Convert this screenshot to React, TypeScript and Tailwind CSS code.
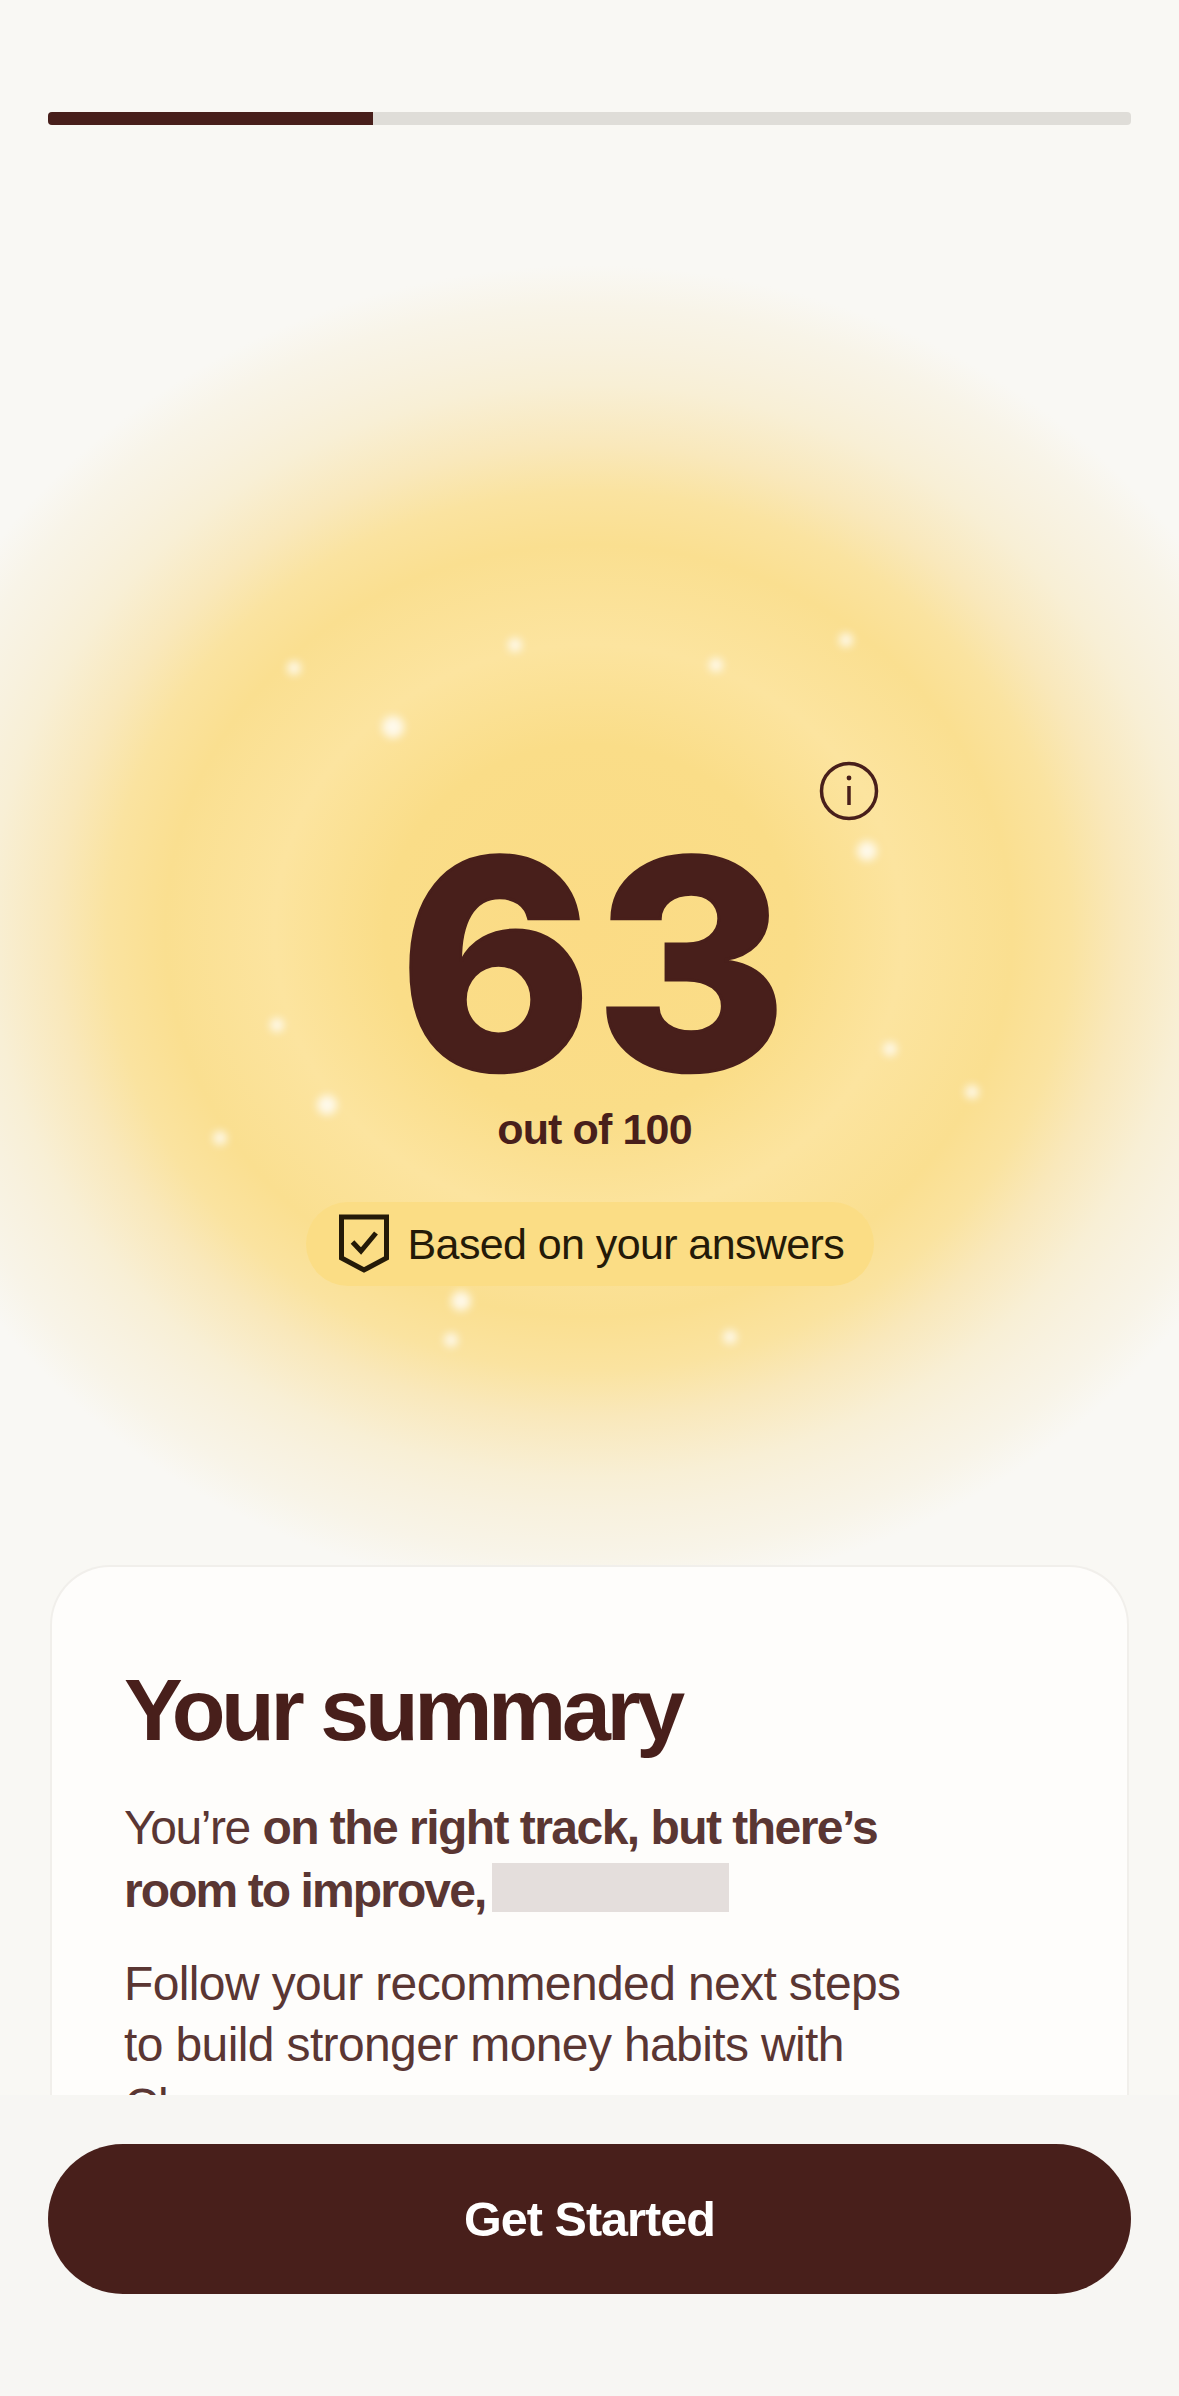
const sans = "font-['Liberation_Sans',Arial,sans-serif]";

// sparkles scattered over the glow: [x, y, size]
const sparkles: [number, number, number][] = [
  [294, 668, 14],
  [515, 645, 14],
  [716, 665, 14],
  [846, 640, 14],
  [393, 727, 22],
  [867, 851, 20],
  [277, 1025, 14],
  [327, 1105, 20],
  [220, 1138, 14],
  [890, 1049, 14],
  [972, 1092, 14],
  [461, 1301, 20],
  [451, 1340, 14],
  [730, 1337, 14],
];

function ShieldCheck() {
  return (
    <svg width="50" height="60" viewBox="0 0 50 60" fill="none" className="shrink-0">
      <path d="M2.5 3H47.5V44L25 56L2.5 44V3Z" stroke="#241a08" strokeWidth="5" strokeLinejoin="miter" />
      <path d="M13.5 28L22 37L37 19" stroke="#241a08" strokeWidth="5" />
    </svg>
  );
}

function InfoMark() {
  return (
    <svg width="60" height="60" viewBox="0 0 60 60" fill="none" className="absolute left-[819px] top-[636px]">
      <circle cx="30" cy="30" r="27.5" stroke="#481f1b" strokeWidth="3.5" />
      <circle cx="30" cy="17" r="2.4" fill="#481f1b" />
      <path d="M30 25V44" stroke="#481f1b" strokeWidth="3.5" />
    </svg>
  );
}

export default function App() {
  return (
    <div className={`relative flex h-[2396px] w-[1179px] flex-col overflow-hidden bg-[#f9f8f4] ${sans}`}>
      {/* glow behind the score */}
      <div className="absolute left-[-141px] top-[265px] h-[1332px] w-[1460px] rounded-full bg-[radial-gradient(ellipse_closest-side,#fbdb85_0%,#fadd88_28%,#fce49f_43%,#fadf90_58%,#fae3a0_66%,#f9e8bb_73%,#f8efd5_82%,#f8f1de_87%,#f8f4e8_94%,#f9f8f4_100%)]" />
      {sparkles.map(([x, y, size], i) => (
        <div
          key={i}
          className="absolute rounded-full bg-white/80 blur-[4px]"
          style={{ left: x - size / 2, top: y - size / 2, width: size, height: size }}
        />
      ))}

      {/* progress */}
      <div className="relative px-12 pt-[112px]">
        <div className="h-[13px] overflow-hidden rounded-[4px] bg-[#dfddd8]">
          <div className="h-full w-[325px] bg-[#481f1b]" />
        </div>
      </div>

      {/* score */}
      <div className="relative flex h-[1440px] flex-col items-center">
        <InfoMark />
        <div className="ml-[10px] mt-[714px] font-['Inter',sans-serif] text-[292px] font-extrabold leading-[250px] tracking-[0.01em] text-[#481f1b] [-webkit-text-stroke:3px_#481f1b]">
          63
        </div>
        <div className="ml-[10px] mt-[15px] text-[43px] font-bold leading-[50px] tracking-[-0.02em] text-[#481f1b]">
          out of 100
        </div>
        <div className="mt-[48px] flex h-[84px] w-[568px] items-center gap-[19px] rounded-full bg-[#fbdd85] pl-[33px]">
          <ShieldCheck />
          <span className="text-[43px] leading-none tracking-[-0.014em] text-[#241a08]">Based on your answers</span>
        </div>
      </div>

      {/* summary card, cut off by the footer */}
      <div className="relative mx-[50px] min-h-0 flex-1 overflow-hidden rounded-t-[60px] border-x-2 border-t-2 border-[#f1efeb] bg-[#fefdfb] pl-[72px] pt-[93px]">
        <h2 className="text-[88px] font-bold leading-[100px] tracking-[-0.05em] text-[#481f1b]">Your summary</h2>
        <p className="mt-[37px] text-[48px] leading-[61px] tracking-[-0.013em] text-[#5a3633]">
          <span className="tracking-[-0.03em]">You’re</span> <b className="tracking-[-0.032em]">on the right track, but there’s</b>
          <br />
          <b className="tracking-[-0.04em]">room to improve,</b>
          <span className="ml-[7px] inline-block h-[49px] w-[237px] translate-y-[5px] bg-[#e4dedc]" />
        </p>
        <p className="mt-[32px] text-[48px] leading-[61px] tracking-[-0.013em] text-[#5a3633]">
          Follow your recommended next steps
          <br />
          to build stronger money habits with
          <br />
          Cleo
        </p>
      </div>

      {/* footer */}
      <div className="relative h-[301px] shrink-0 bg-[#f7f6f3] px-12 pt-[49px]">
        <button className="flex h-[150px] w-full items-center justify-center rounded-full bg-[#481f1b] text-[48.5px] font-bold tracking-[-0.02em] text-white">
          Get Started
        </button>
      </div>
    </div>
  );
}
